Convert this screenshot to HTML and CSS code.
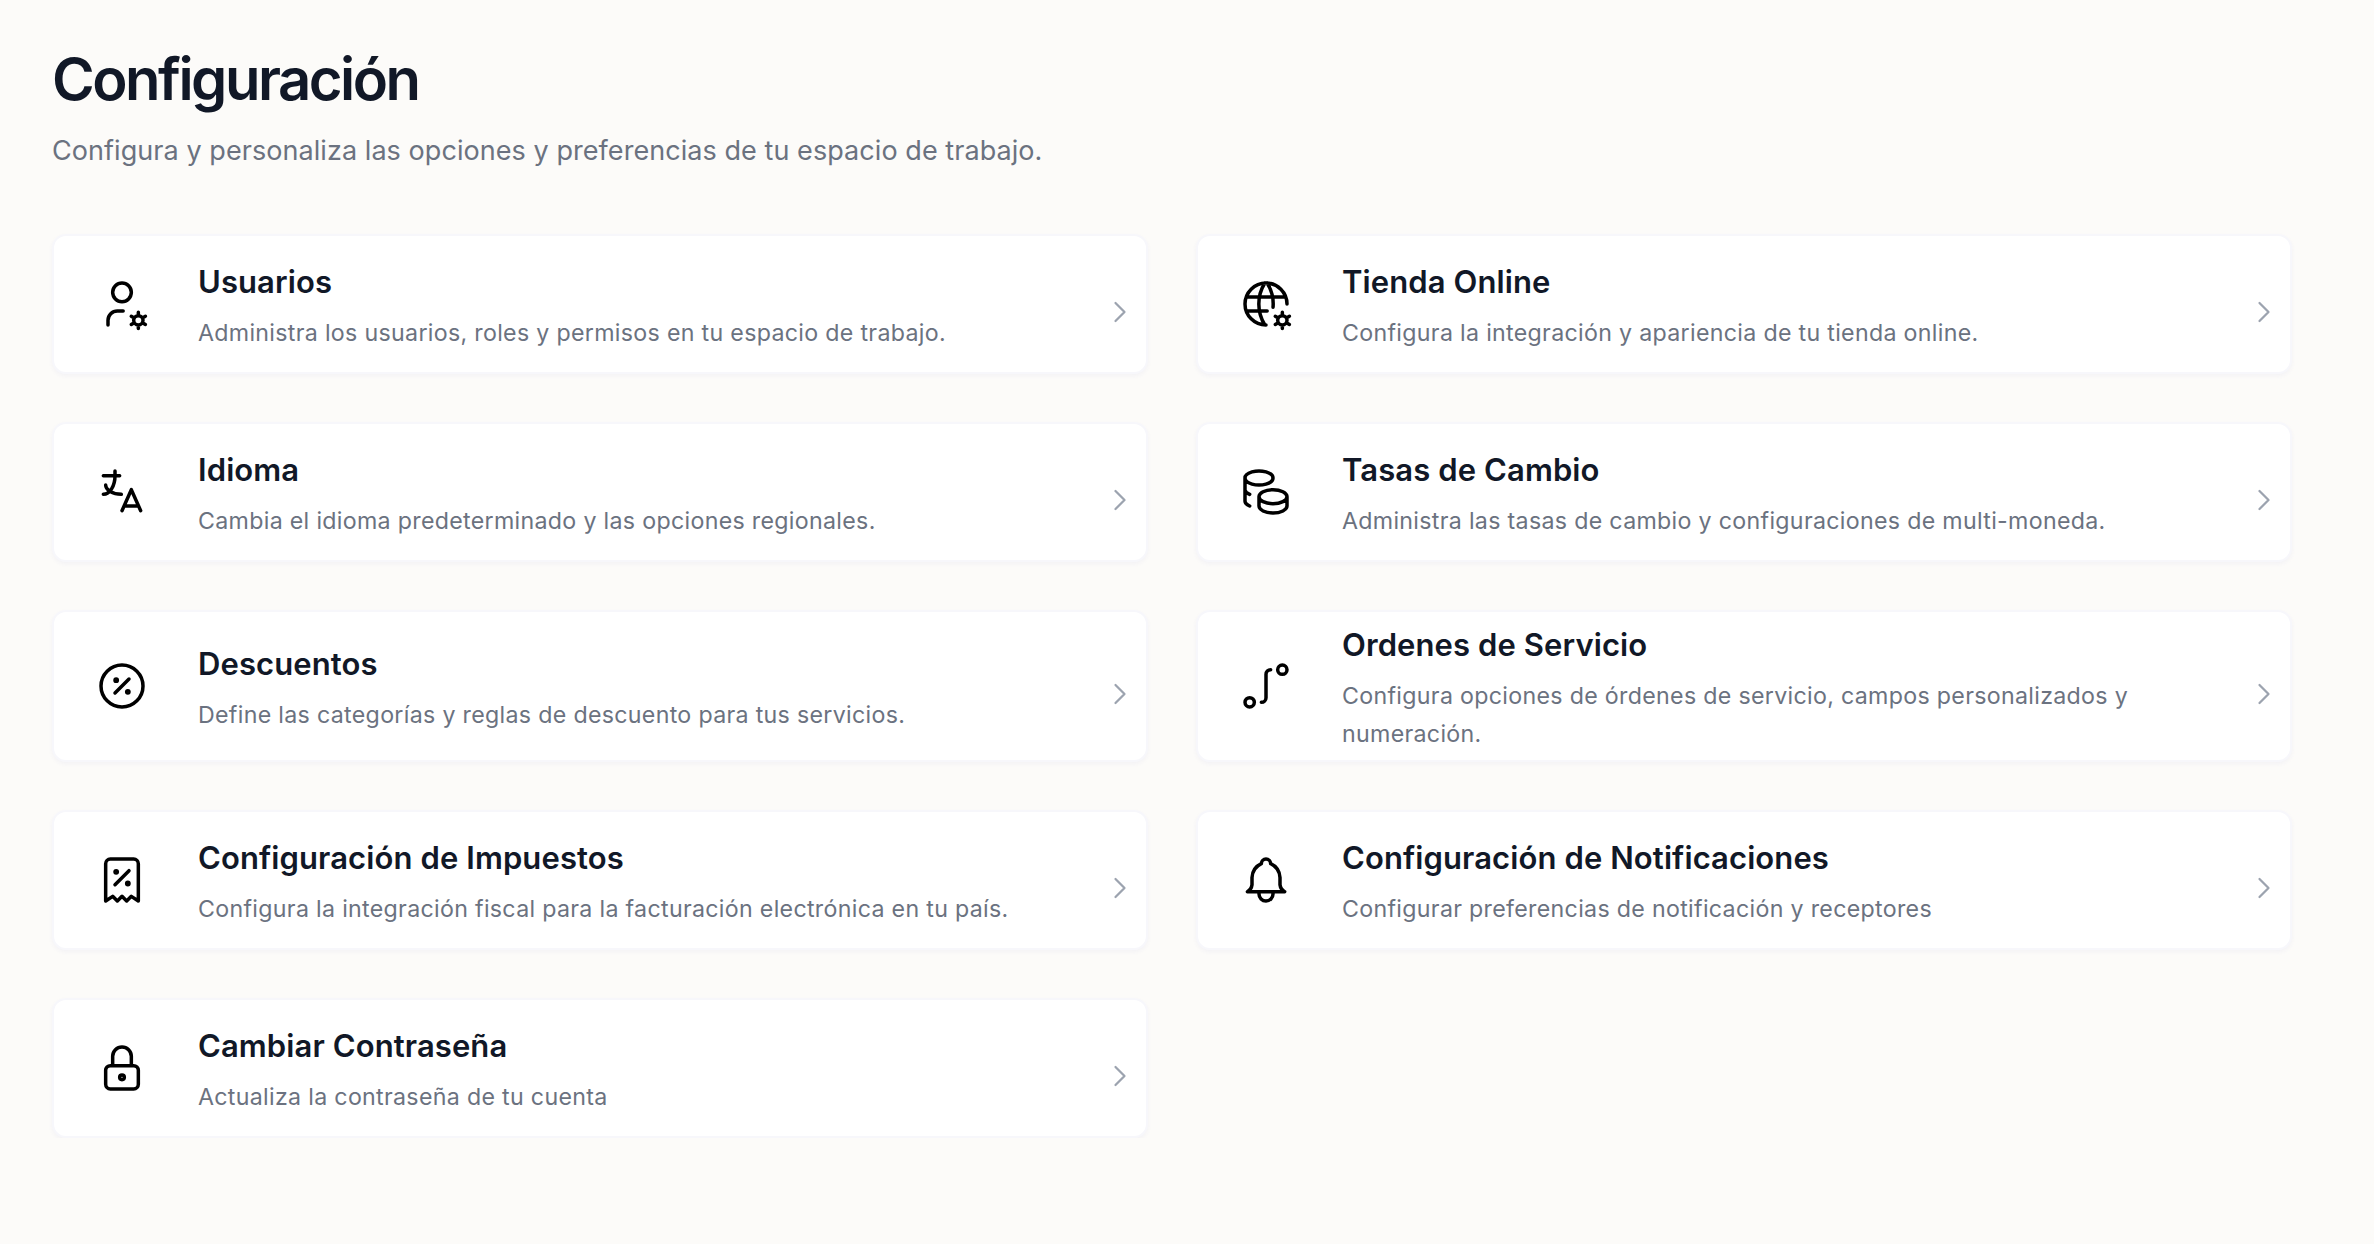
FILE: index.html
```html
<!DOCTYPE html>
<html lang="es">
<head>
<meta charset="utf-8">
<title>Configuración</title>
<link rel="stylesheet" href="styles.css">
</head>
<body>
<svg class="sprite" aria-hidden="true">
  <symbol id="chevron" viewBox="0 0 24 24"><path d="M9 6l6 6l-6 6"/></symbol>
  <symbol id="cog" viewBox="0 0 24 24">
    <path d="M17.001 19a2 2 0 1 0 4 0a2 2 0 1 0 -4 0M19.001 15.5v1.5M19.001 21v1.5M22.032 17.25l-1.299 .75M17.27 20l-1.3 .75M15.97 17.25l1.3 .75M20.733 20l1.3 .75"/>
  </symbol>
</svg>
<main class="page">
  <header class="header">
    <h1 class="heading">Configuración</h1>
    <p class="subheading">Configura y personaliza las opciones y preferencias de tu espacio de trabajo.</p>
  </header>
  <section class="grid">
    <a class="card">
      <svg class="icon" viewBox="0 0 24 24"><path d="M8 7a4 4 0 1 0 8 0a4 4 0 0 0 -8 0M6 21v-2a4 4 0 0 1 4 -4h2.5"/><use href="#cog"/></svg>
      <div class="body"><h2 class="title">Usuarios</h2><p class="desc">Administra los usuarios, roles y permisos en tu espacio de trabajo.</p></div>
      <svg class="chevron"><use href="#chevron"/></svg>
    </a>
    <a class="card">
      <svg class="icon" viewBox="0 0 24 24"><path d="M21 12a9 9 0 1 0 -9 9M3.6 9h16.8M3.6 15h8.9M11.5 3a17 17 0 0 0 0 18M12.5 3a16.992 16.992 0 0 1 2.522 10.376"/><use href="#cog"/></svg>
      <div class="body"><h2 class="title">Tienda Online</h2><p class="desc">Configura la integración y apariencia de tu tienda online.</p></div>
      <svg class="chevron"><use href="#chevron"/></svg>
    </a>
    <a class="card">
      <svg class="icon" viewBox="0 0 24 24"><path d="M4 5h7M9 3v2c0 4.418 -2.239 8 -5 8M5 9c0 2.144 2.952 3.908 6.7 4M12 20l4 -9l4 9M19.1 18h-6.2"/></svg>
      <div class="body"><h2 class="title">Idioma</h2><p class="desc">Cambia el idioma predeterminado y las opciones regionales.</p></div>
      <svg class="chevron"><use href="#chevron"/></svg>
    </a>
    <a class="card">
      <svg class="icon" viewBox="0 0 24 24"><path d="M9 14c0 1.657 2.686 3 6 3s6 -1.343 6 -3s-2.686 -3 -6 -3s-6 1.343 -6 3zM9 14v4c0 1.656 2.686 3 6 3s6 -1.344 6 -3v-4M3 6c0 1.072 1.144 2.062 3 2.598s4.144 .536 6 0c1.856 -.536 3 -1.526 3 -2.598c0 -1.072 -1.144 -2.062 -3 -2.598s-4.144 -.536 -6 0c-1.856 .536 -3 1.526 -3 2.598zM3 6v10c0 .888 .772 1.45 2 2M3 11c0 .888 .772 1.45 2 2"/></svg>
      <div class="body"><h2 class="title">Tasas de Cambio</h2><p class="desc">Administra las tasas de cambio y configuraciones de multi-moneda.</p></div>
      <svg class="chevron"><use href="#chevron"/></svg>
    </a>
    <a class="card">
      <svg class="icon" viewBox="0 0 24 24"><circle cx="12" cy="12" r="9"/><path d="M9 15l6 -6"/><circle class="dot" cx="9.5" cy="9.5" r=".5"/><circle class="dot" cx="14.5" cy="14.5" r=".5"/></svg>
      <div class="body"><h2 class="title">Descuentos</h2><p class="desc">Define las categorías y reglas de descuento para tus servicios.</p></div>
      <svg class="chevron"><use href="#chevron"/></svg>
    </a>
    <a class="card">
      <svg class="icon" viewBox="0 0 24 24"><circle cx="5" cy="19" r="2"/><circle cx="19" cy="5" r="2"/><path d="M14 5a2 2 0 0 0 -2 2v10a2 2 0 0 1 -2 2"/></svg>
      <div class="body"><h2 class="title">Ordenes de Servicio</h2><p class="desc">Configura opciones de órdenes de servicio, campos personalizados y numeración.</p></div>
      <svg class="chevron"><use href="#chevron"/></svg>
    </a>
    <a class="card">
      <svg class="icon" viewBox="0 0 24 24"><path d="M9 14l6 -6"/><circle class="dot" cx="9.5" cy="8.5" r=".5"/><circle class="dot" cx="14.5" cy="13.5" r=".5"/><path d="M5 21v-16a2 2 0 0 1 2 -2h10a2 2 0 0 1 2 2v16l-3 -2l-2 2l-2 -2l-2 2l-2 -2l-3 2"/></svg>
      <div class="body"><h2 class="title">Configuración de Impuestos</h2><p class="desc">Configura la integración fiscal para la facturación electrónica en tu país.</p></div>
      <svg class="chevron"><use href="#chevron"/></svg>
    </a>
    <a class="card">
      <svg class="icon" viewBox="0 0 24 24"><path d="M10 5a2 2 0 1 1 4 0a7 7 0 0 1 4 6v3a4 4 0 0 0 2 3h-16a4 4 0 0 0 2 -3v-3a7 7 0 0 1 4 -6M9 17v1a3 3 0 0 0 6 0v-1"/></svg>
      <div class="body"><h2 class="title">Configuración de Notificaciones</h2><p class="desc">Configurar preferencias de notificación y receptores</p></div>
      <svg class="chevron"><use href="#chevron"/></svg>
    </a>
    <a class="card">
      <svg class="icon" viewBox="0 0 24 24"><path d="M5 13a2 2 0 0 1 2 -2h10a2 2 0 0 1 2 2v6a2 2 0 0 1 -2 2h-10a2 2 0 0 1 -2 -2v-6zM11 16a1 1 0 1 0 2 0a1 1 0 0 0 -2 0M8 11v-4a4 4 0 1 1 8 0v4"/></svg>
      <div class="body"><h2 class="title">Cambiar Contraseña</h2><p class="desc">Actualiza la contraseña de tu cuenta</p></div>
      <svg class="chevron"><use href="#chevron"/></svg>
    </a>
  </section>
</main>
</body>
</html>
```
FILE: styles.css
```css
* { box-sizing: border-box; }
body { margin: 0; background: #fcfbf9; font-family: Inter, "Liberation Sans", sans-serif; color: #111827; }
h1, h2, p { margin: 0; }
.sprite { display: none; }
.page { padding: 43px 82px 0 52px; }
.header { height: 191px; }
.heading { font-size: 58px; line-height: 72px; font-weight: 600; letter-spacing: -2.5px; }
.subheading { margin-top: 16px; font-size: 27px; line-height: 40px; letter-spacing: .06px; color: #6b7280; }
.grid { display: grid; grid-template-columns: 1fr 1fr; gap: 48px; }
.card {
  display: flex; align-items: center; min-height: 140px; padding: 0 8px 0 40px;
  background: #fff; border: 2px solid #f7f7fb; border-radius: 14px;
  box-shadow: 0 2px 4px rgba(80, 80, 180, .05);
}
.icon { flex: none; width: 56px; height: 56px; margin-right: 48px; fill: none; stroke: #000; stroke-width: 1.5; stroke-linecap: round; stroke-linejoin: round; }
.dot { fill: #000; }
.body { flex: 1; padding: 9px 80px 7px 0; }
.title { font-size: 31px; line-height: 48px; font-weight: 600; letter-spacing: .1px; }
.desc { margin-top: 8px; font-size: 23.2px; line-height: 38px; letter-spacing: .31px; color: #6b7280; }
.chevron { flex: none; width: 36px; height: 36px; margin-top: 16px; fill: none; stroke: #9ca3af; stroke-width: 1.5; stroke-linecap: round; stroke-linejoin: round; }
```
